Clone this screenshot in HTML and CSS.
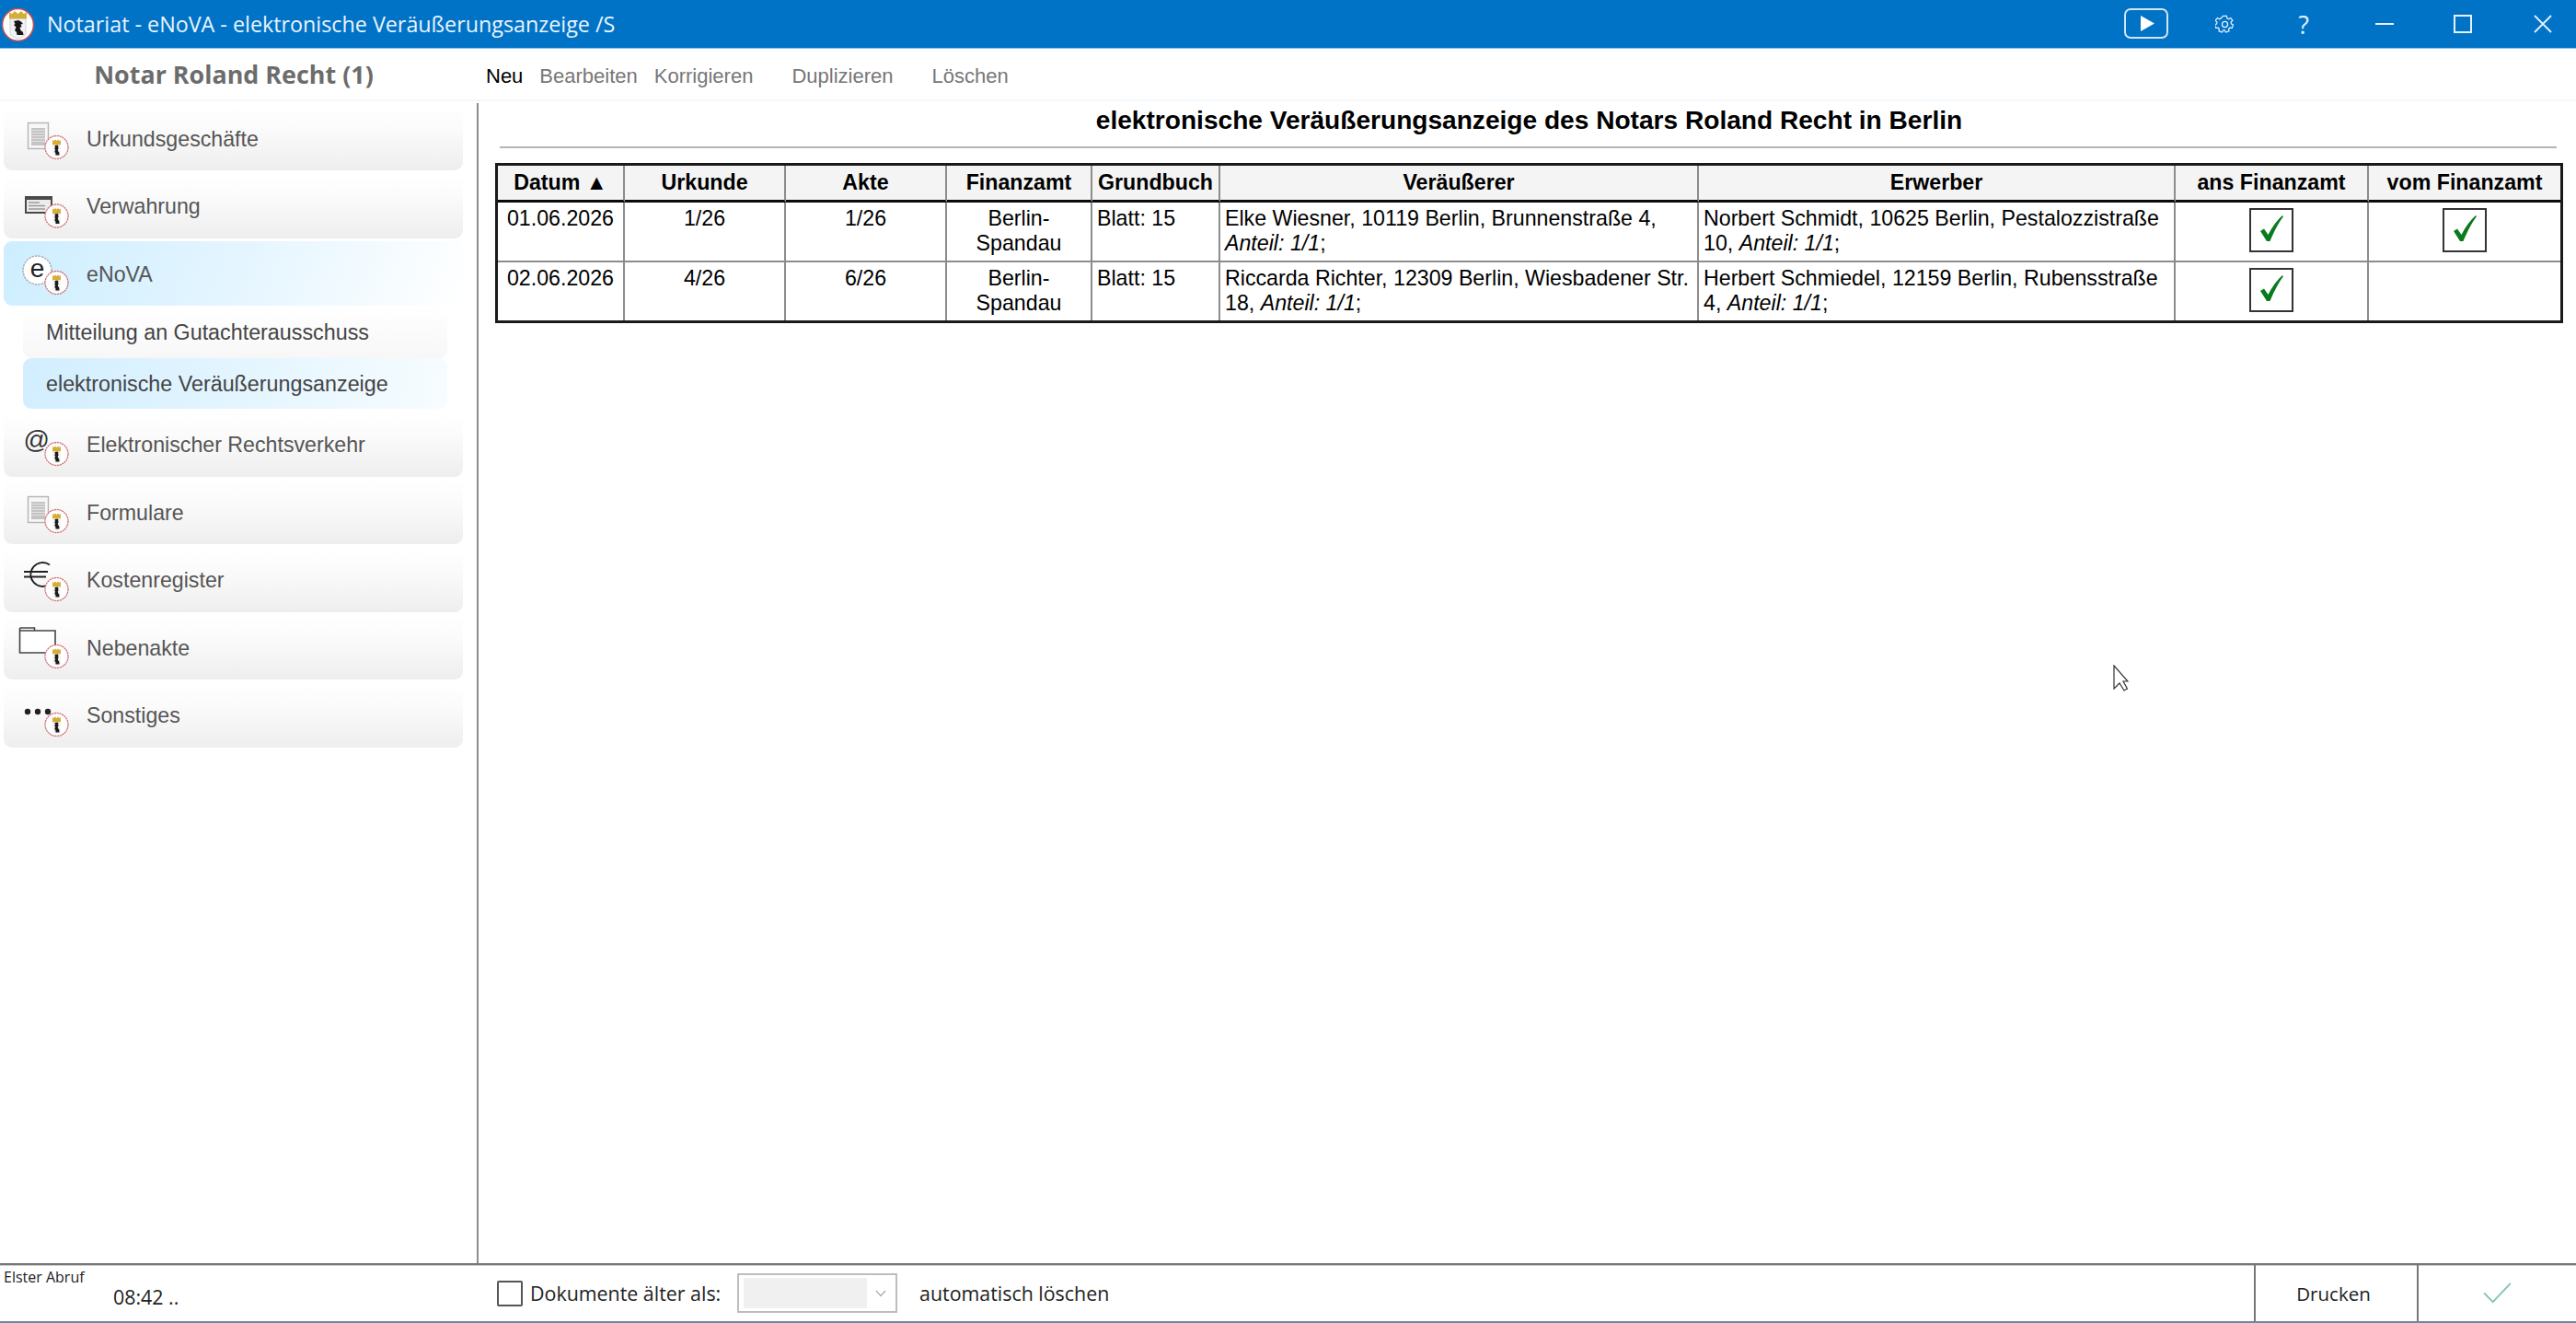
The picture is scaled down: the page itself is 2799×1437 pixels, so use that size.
FILE: index.html
```html
<!DOCTYPE html>
<html lang="de">
<head>
<meta charset="utf-8">
<title>Notariat - eNoVA</title>
<link rel="stylesheet" href="styles.css">
</head>
<body>
<svg class="sprite" aria-hidden="true">
  <symbol id="seal" viewBox="0 0 27 27">
    <circle cx="13.5" cy="13.5" r="12.5" fill="#fff" stroke="#d0747c" stroke-width="1.300" stroke-dasharray="2.200 .6"/>
    <path d="M9 5.500l1.500 1 1.500-1.500 1.500 1.500 1.500-1.500 1.500 1.500 1.500-1v5.500h-9z" fill="#d8ad35"/>
    <path d="M9 11h9v9q0 2-1.500 2.500l-3 1.500-3-1.500q-1.500-.5-1.500-2.500z" fill="#f4f4f4"/>
    <path d="M11.500 11.500l3-.5 1.200 1.500-.8 1 1 1.500-1.200.5.600 2.500 1 1 .2 3h-4l-.2-2.500-1-1 .8-2.500-1-1 .8-1z" fill="#1c1c1c"/>
  </symbol>
  <symbol id="logo" viewBox="0 0 37 38">
    <ellipse cx="18.500" cy="19" rx="17" ry="17.500" fill="#fff" stroke="#b8505a" stroke-width="1.600"/>
    <path d="M9 5l3 2 3-3 3.500 3 3.500-3 3 3 3-2v7.500h-19z" fill="#d8ad35"/>
    <path d="M10 12.500h17v15q0 3-3 4l-5.500 3-5.500-3q-3-1-3-4z" fill="#f2f2f2" stroke="#bbb" stroke-width=".6"/>
    <path d="M14 15l5-1 3 1.500 2 2.500-2.500.5 1 2.500-2 1 1 3 2.500 2 .5 3h-7l-.5-3-2-2 1.500-3.500-2.500-2.500 1.500-1z" fill="#161616"/>
  </symbol>
  <symbol id="doc" viewBox="0 0 56 56">
    <rect x="10.500" y="11.500" width="22" height="28" fill="#f7f7f7" stroke="#b5b5b5" stroke-width="1.400"/>
    <rect x="14" y="17" width="15" height="19" fill="#c4c4c4"/>
    <path d="M14 19.500h15M14 22.500h15M14 25.500h15M14 28.500h15M14 31.500h15" stroke="#eee" stroke-width=".7"/>
  </symbol>
  <symbol id="check" viewBox="0 0 44 44">
    <path d="M10 23l4-2.500 4.500 6.500q6.500-13 15.500-21l1 1q-8 11-14.500 27h-3.500z" fill="#0a7a1e"/>
  </symbol>
</svg>

<header class="titlebar">
  <svg class="app-logo"><use href="#logo"/></svg>
  <span class="app-title">Notariat - eNoVA - elektronische Veräußerungsanzeige /S</span>
  <div class="win-controls">
    <svg class="wc wc-play" viewBox="0 0 48 33"><rect x="1" y="1" width="46" height="31" rx="6" fill="none" stroke="#cfe4f5" stroke-width="2"/><path d="M18 8l15 8.500-15 8.500z" fill="#fff"/></svg>
    <svg class="wc wc-gear" viewBox="0 0 22 22"><circle cx="11" cy="11" r="3.200" fill="none" stroke="#e6f1fa" stroke-width="1.300"/><path d="M9 1.500h4l.5 2.600 1.700.8 2.300-1.300 2.300 3-1.900 1.800.3 1.900 2.200 1.300-1.200 3.500-2.600-.3-1.300 1.400.4 2.600-3.600 1.200-1.300-2.300h-1.700l-1.300 2.300-3.600-1.200.4-2.600-1.300-1.400-2.600.3-1.200-3.500 2.200-1.300.3-1.900-1.900-1.800 2.300-3 2.300 1.300 1.700-.8z" fill="none" stroke="#e6f1fa" stroke-width="1.300"/></svg>
    <span class="wc wc-help">?</span>
    <svg class="wc wc-min" viewBox="0 0 20 20"><path d="M0 10h20" stroke="#e6f1fa" stroke-width="2"/></svg>
    <svg class="wc wc-max" viewBox="0 0 20 20"><rect x="1" y="1" width="18" height="18" fill="none" stroke="#e6f1fa" stroke-width="2"/></svg>
    <svg class="wc wc-close" viewBox="0 0 20 20"><path d="M1 1l18 18M19 1l-18 18" stroke="#e6f1fa" stroke-width="1.800"/></svg>
  </div>
</header>

<div class="toolbar">
  <div class="brand">Notar Roland Recht (1)</div>
  <nav class="tools">
    <span class="tool tool-on">Neu</span>
    <span class="tool">Bearbeiten</span>
    <span class="tool">Korrigieren</span>
    <span class="tool tool-far">Duplizieren</span>
    <span class="tool tool-far">Löschen</span>
  </nav>
</div>

<div class="workspace">
  <aside class="sidebar">
    <div class="item">
      <svg class="ico" viewBox="0 0 56 56"><use href="#doc" width="56" height="56"/><use href="#seal" x="28" y="24.500" width="27" height="27"/></svg>
      <span>Urkundsgeschäfte</span>
    </div>
    <div class="item">
      <svg class="ico" viewBox="0 0 56 56"><rect x="7" y="17" width="30" height="19" fill="#4a4a4a"/><rect x="9" y="21" width="26" height="13" fill="#ececec"/><path d="M11 24h12M11 27.500h18M11 31h18" stroke="#9a9a9a" stroke-width="1.400"/><use href="#seal" x="28" y="25" width="27" height="27"/></svg>
      <span>Verwahrung</span>
    </div>
    <div class="item item-active">
      <svg class="ico" viewBox="0 0 56 56"><circle cx="20.500" cy="24.500" r="15.500" fill="#fff" stroke="#aaa" stroke-width="1.400" stroke-dasharray="2.500 1"/><text class="ico-e" x="20.500" y="32" text-anchor="middle">e</text><use href="#seal" x="28" y="24.500" width="27" height="27"/></svg>
      <span>eNoVA</span>
    </div>
    <div class="subnav">
      <div class="subitem">Mitteilung an Gutachterausschuss</div>
      <div class="subitem subitem-active">elektronische Veräußerungsanzeige</div>
    </div>
    <div class="item">
      <svg class="ico" viewBox="0 0 56 56"><text class="ico-at" x="5.500" y="32">@</text><use href="#seal" x="28" y="24.500" width="27" height="27"/></svg>
      <span>Elektronischer Rechtsverkehr</span>
    </div>
    <div class="item">
      <svg class="ico" viewBox="0 0 56 56"><use href="#doc" width="56" height="56"/><use href="#seal" x="28" y="24.500" width="27" height="27"/></svg>
      <span>Formulare</span>
    </div>
    <div class="item">
      <svg class="ico" viewBox="0 0 56 56"><path d="M34 11.500A13 13 0 1 0 34 32.500" fill="none" stroke="#222" stroke-width="1.800"/><path d="M6 19h26M6 24.500h24" stroke="#222" stroke-width="1.800"/><use href="#seal" x="28" y="24.500" width="27" height="27"/></svg>
      <span>Kostenregister</span>
    </div>
    <div class="item">
      <svg class="ico" viewBox="0 0 56 56"><path d="M1.500 7h16v3.500M1.500 7v27h38.500v-24h-38.500" fill="#fff" stroke="#444" stroke-width="1.600"/><use href="#seal" x="28" y="24.500" width="27" height="27"/></svg>
      <span>Nebenakte</span>
    </div>
    <div class="item">
      <svg class="ico" viewBox="0 0 56 56"><circle cx="10" cy="24" r="3.200" fill="#222"/><circle cx="21" cy="24" r="3.200" fill="#222"/><circle cx="32" cy="24" r="3.200" fill="#222"/><use href="#seal" x="28" y="24.500" width="27" height="27"/></svg>
      <span>Sonstiges</span>
    </div>
  </aside>

  <main class="content">
    <h1 class="page-title">elektronische Veräußerungsanzeige des Notars Roland Recht in Berlin</h1>
    <hr class="rule">
    <table class="grid">
      <colgroup>
        <col class="c1"><col class="c2"><col class="c3"><col class="c4"><col class="c5"><col class="c6"><col class="c7"><col class="c8"><col class="c9">
      </colgroup>
      <thead>
        <tr>
          <th>Datum ▲</th><th>Urkunde</th><th>Akte</th><th>Finanzamt</th><th>Grundbuch</th><th>Veräußerer</th><th>Erwerber</th><th>ans Finanzamt</th><th>vom Finanzamt</th>
        </tr>
      </thead>
      <tbody>
        <tr class="row-a">
          <td class="mid">01.06.2026</td><td class="mid">1/26</td><td class="mid">1/26</td><td class="mid">Berlin-<br>Spandau</td>
          <td>Blatt: 15</td>
          <td>Elke Wiesner, 10119 Berlin, Brunnenstraße 4, <i>Anteil: 1/1</i>;</td>
          <td>Norbert Schmidt, 10625 Berlin, Pestalozzistraße 10, <i>Anteil: 1/1</i>;</td>
          <td class="mid"><span class="tick"><svg><use href="#check"/></svg></span></td>
          <td class="mid"><span class="tick"><svg><use href="#check"/></svg></span></td>
        </tr>
        <tr class="row-b">
          <td class="mid">02.06.2026</td><td class="mid">4/26</td><td class="mid">6/26</td><td class="mid">Berlin-<br>Spandau</td>
          <td>Blatt: 15</td>
          <td>Riccarda Richter, 12309 Berlin, Wiesbadener Str. 18, <i>Anteil: 1/1</i>;</td>
          <td>Herbert Schmiedel, 12159 Berlin, Rubensstraße 4, <i>Anteil: 1/1</i>;</td>
          <td class="mid"><span class="tick"><svg><use href="#check"/></svg></span></td>
          <td class="mid"></td>
        </tr>
      </tbody>
    </table>
  </main>
</div>

<footer class="statusbar">
  <div class="elster">
    <div class="elster-label">Elster Abruf</div>
    <div class="elster-time">08:42 ..</div>
  </div>
  <div class="cleanup">
    <span class="box"></span>
    <span class="cleanup-label">Dokumente älter als:</span>
    <span class="select"><span class="select-value"></span><svg class="chev" viewBox="0 0 12 8"><path d="M1 1l5 5.500 5-5.500" fill="none" stroke="#aaa" stroke-width="1.200"/></svg></span>
    <span class="cleanup-tail">automatisch löschen</span>
  </div>
  <div class="print">Drucken</div>
  <div class="confirm"><svg viewBox="0 0 32 24"><path d="M1 12l10 10 20-21" fill="none" stroke="#86c4ba" stroke-width="2"/></svg></div>
</footer>

<svg class="cursor" viewBox="0 0 17 29"><path d="M1 1v25l6-6 5 8 3.500-2-4.500-8h5z" fill="#fff" stroke="#333" stroke-width="1.200"/></svg>
</body>
</html>
```
FILE: styles.css
```css
* { box-sizing: border-box; }
html, body { height: 100%; }
body {
  margin: 0;
  height: 1437px;
  width: 2799px;
  overflow: hidden;
  display: flex;
  flex-direction: column;
  background: #fff;
  font-family: "Liberation Sans", Arial, sans-serif;
  color: #000;
  position: relative;
}
.sprite { position: absolute; width: 0; height: 0; }

/* Title bar */
.titlebar {
  height: 53px;
  flex: none;
  display: flex;
  align-items: center;
  background: #0173c7;
  border-bottom: 1px solid #8cc3ea;
  color: #eaf4fc;
}
.app-logo { width: 37px; height: 38px; margin-left: 1px; margin-top: 1px; flex: none; }
.app-title {
  margin-left: 13px;
  font-family: "Open Sans", sans-serif;
  font-size: 23.300px;
  white-space: nowrap;
}
.win-controls { margin-left: auto; display: flex; align-items: center; height: 100%; }
.wc { flex: none; display: block; }
.wc-play { width: 48px; height: 33px; margin-top: -2px; margin-right: 51px; }
.wc-gear { width: 21px; height: 21px; margin-right: 63px; }
.wc-help { width: 24px; font-size: 27px; text-align: center; font-family: "Open Sans", sans-serif; margin-right: 66px; color: #e6f1fa; line-height: 1; }
.wc-min { width: 20px; height: 20px; margin-right: 65px; }
.wc-max { width: 20px; height: 20px; margin-right: 67px; }
.wc-close { width: 20px; height: 20px; margin-right: 26px; }

/* Toolbar */
.toolbar {
  height: 57px;
  flex: none;
  display: flex;
  align-items: center;
  border-bottom: 2px solid #f5f9fd;
}
.brand {
  width: 518px;
  padding-right: 10px;
  flex: none;
  text-align: center;
  font-family: "Open Sans", sans-serif;
  font-weight: 700;
  font-size: 26.900px;
  color: #6c6c6c;
}
.tools { display: flex; margin-left: 10px; padding-top: 4px; gap: 18px; font-size: 22px; }
.tool { color: #777; }
.tool-on { color: #000; }
.tool-far { margin-left: 24px; }

/* Workspace */
.workspace { flex: 1; min-height: 0; display: flex; }
.sidebar {
  width: 520px;
  flex: none;
  margin-top: 2px;
  padding: 3px 15px 0 4px;
  border-right: 2px solid #8c8c8c;
  display: flex;
  flex-direction: column;
  gap: 3.500px;
}
.item {
  height: 70px;
  flex: none;
  display: flex;
  align-items: center;
  gap: 18px;
  padding-left: 16px;
  border-radius: 9px;
  background: linear-gradient(#fff 0%, #fbfbfb 35%, #eeeeee 100%);
  font-size: 23.200px;
  color: #555;
}
.item span { padding-top: 2px; }
.item-active { background: linear-gradient(110deg, #cdeeff 0%, #e4f5ff 50%, #fff 100%); }
.ico { width: 56px; height: 56px; flex: none; }
.ico-e { font: 28px "Liberation Sans", sans-serif; fill: #222; }
.ico-at { font: 28px "Liberation Sans", sans-serif; fill: #333; }
.subnav { margin: -3.500px 17px 0 21px; padding-top: 1px; display: flex; flex-direction: column; }
.subitem {
  height: 55.500px;
  display: flex;
  align-items: center;
  padding: 2px 0 0 25px;
  border-radius: 9px;
  background: linear-gradient(#fff, #f7f7f7);
  font-size: 23.300px;
  color: #444;
}
.subitem-active { background: linear-gradient(100deg, #d2eeff 0%, #e3f5ff 50%, #f7fcff 100%); }

/* Content */
.content { flex: 1; min-width: 0; padding: 0 14px 0 18px; }
.page-title {
  margin: 0;
  padding-top: 4px;
  height: 46px;
  text-align: center;
  font-size: 28.100px;
  line-height: 34px;
  font-weight: 700;
}
.rule {
  margin: 3px 7px 0 5px;
  border: 0;
  height: 2px;
  background: #b6b6b6;
}
.grid {
  margin-top: 16px;
  width: 2247px;
  table-layout: fixed;
  border-collapse: separate;
  border-spacing: 0;
  border: 3px solid #1a1a1a;
  font-size: 23.200px;
  line-height: 27px;
}
.c1 { width: 138px; } .c2 { width: 175px; } .c3 { width: 175px; }
.c4 { width: 158px; } .c5 { width: 139px; } .c6 { width: 520px; }
.c7 { width: 518px; } .c8 { width: 210px; } .c9 { width: 208px; }
.grid th {
  height: 40px;
  padding: 0;
  background: #f4f4f4;
  font-weight: 700;
  text-align: center;
  border-right: 2px solid #8c8c8c;
  border-bottom: 3px solid #0a0a0a;
}
.grid td {
  padding: 4px 2px 0 5px;
  vertical-align: top;
  border-right: 2px solid #8c8c8c;
  text-align: left;
}
.grid th:last-child, .grid td:last-child { border-right: 0; }
.row-a td { height: 65px; border-bottom: 2px solid #8c8c8c; }
.row-b td { height: 63px; }
.grid td.mid { text-align: center; padding-left: 0; padding-right: 0; }
.tick {
  display: block;
  width: 48px;
  height: 48px;
  margin: 2px auto 0;
  border: 2px solid #333;
}
.tick svg { display: block; width: 44px; height: 44px; }

/* Status bar */
.statusbar {
  height: 65px;
  flex: none;
  display: flex;
  border-top: 2px solid #777;
  border-bottom: 2px solid #6f8aa0;
  box-shadow: inset 0 1px #ccc;
  font-family: "Open Sans", sans-serif;
  font-size: 21.400px;
  color: #222;
}
.elster { width: 540px; flex: none; padding: 5px 0 0 4px; }
.elster-label { font-size: 16px; line-height: 16px; }
.elster-time { margin-left: 119px; line-height: 28px; }
.cleanup { flex: 1; display: flex; align-items: center; }
.box { width: 28px; height: 28px; flex: none; border: 2px solid #555; border-radius: 2px; }
.cleanup-label { margin-left: 8px; width: 225px; flex: none; white-space: nowrap; }
.select {
  width: 174px;
  height: 43px;
  flex: none;
  display: flex;
  align-items: center;
  padding: 0 10px 0 5px;
  border: 2px solid #bdbdbd;
  justify-content: space-between;
}
.select-value { width: 134px; height: 33px; background: #f0f0f0; }
.chev { width: 12px; height: 8px; }
.cleanup-tail { margin-left: 24px; }
.print {
  width: 177px;
  flex: none;
  display: flex;
  align-items: center;
  justify-content: center;
  padding-right: 6px;
  border-left: 2px solid #777;
  font-size: 20.500px;
}
.confirm {
  width: 173px;
  flex: none;
  display: flex;
  align-items: center;
  justify-content: center;
  border-left: 2px solid #777;
}
.confirm svg { width: 31px; height: 23px; }

/* Pointer lying over the page */
.cursor { position: absolute; left: 2296px; top: 722px; width: 17px; height: 29px; }
```
